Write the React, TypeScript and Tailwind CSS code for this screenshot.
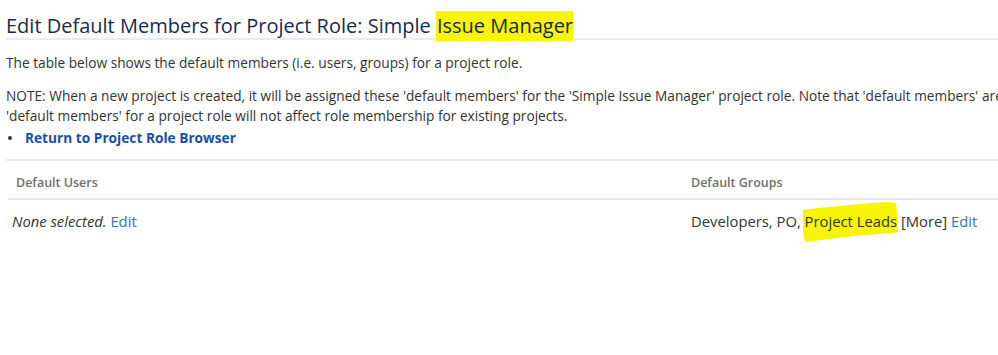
export default function App() {
  return (
    <div className="w-[998px] h-[355px] overflow-hidden bg-white font-['Segoe_UI','Open_Sans',sans-serif] text-[#333333]">
      <div className="pl-[6px]">
        <h1 className="pt-[15px] pb-[1px] text-[20px] leading-[22px] text-[#172b4d] border-b-2 border-[#ebebeb] whitespace-nowrap">
          Edit Default Members for Project Role: Simple{" "}
          <span className="bg-[#f7f500] pt-[1px] pb-[2px] pl-[1px]">Issue Manager</span>
        </h1>
        <p className="mt-[13px] text-[13.7px] leading-[20px] whitespace-nowrap">
          The table below shows the default members (i.e. users, groups) for a project role.
        </p>
        <p className="mt-[13px] text-[13.7px] leading-[20px]">
          <span className="block whitespace-nowrap">
            NOTE: When a new project is created, it will be assigned these 'default members' for the 'Simple Issue Manager' project role. Note that 'default members' are
          </span>
          <span className="block whitespace-nowrap">
            'default members' for a project role will not affect role membership for existing projects.
          </span>
        </p>
        <ul className="mt-[2px] text-[13.7px] leading-[20px]">
          <li className="flex items-center gap-[13px] pl-[2px]">
            <span className="w-[4px] h-[4px] rounded-full bg-[#333333]" />
            <a className="font-bold text-[#1b4fa3]">Return to Project Role Browser</a>
          </li>
        </ul>
      </div>
      <div className="mt-[11px] ml-[6px] border-t-2 border-[#e9e9e9]">
        <div className="flex ml-[2px] border-b-2 border-[#e9e9e9] pt-[14px] pb-[7px] text-[12.5px] leading-[16px] text-[#707070] font-semibold">
          <div className="w-[683px] pl-[8px]">Default Users</div>
          <div>Default Groups</div>
        </div>
        <div className="flex pt-[10px] text-[14.8px] leading-[22px] text-[#333333]">
          <div className="w-[685px] pl-[6px]">
            <em>None selected.</em> <a className="text-[#3b73af]">Edit</a>
          </div>
          <div className="whitespace-nowrap">
            Developers, PO,{" "}
            <span className="relative inline-block leading-[22px]">
              <svg
                className="absolute left-[-3px] top-[-9px] w-[98px] h-[42px] max-w-none"
                viewBox="0 0 98 42"
                preserveAspectRatio="none"
              >
                <path
                  d="M1 9 C20 6, 50 4, 70 2 C82 1, 90 1, 94 2 C95 12, 95 22, 96 31 L92 32 C70 33, 40 36, 3 41 C0 30, 1 19, 1 9 Z"
                  fill="#f7f500"
                />
              </svg>
              <span className="relative">Project Leads</span>
            </span>{" "}
            [More] <a className="text-[#3b73af]">Edit</a>
          </div>
        </div>
      </div>
    </div>
  );
}
